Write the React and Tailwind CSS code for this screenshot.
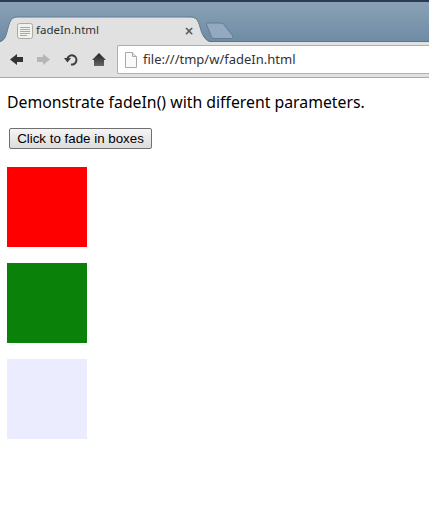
import React from "react";

function TabShape() {
  return (
    <svg className="absolute left-0 top-0" width="240" height="26" viewBox="0 0 240 26">
      <path
        d="M0 26 C5 25 6 20 8 12 C10 4 12 1 18 1 L190 1 C196 1 198 4 200 11 C202 19 205 25 210 26 Z"
        fill="#e1e1e1"
      />
      <path
        d="M0 25 C5 24 6 20 8 12 C10 4 12 1 18 1 L190 1 C196 1 198 4 200 11 C202 19 205 24 210 25"
        fill="none"
        stroke="#5f7b94"
        strokeWidth="1"
      />
      <path
        d="M206.5 8.5 C206.5 7.5 207.5 7 208.5 7 L220 7 C223 7 224 8 225 10 L232.5 19.5 C233 21 232.5 22.5 230.5 22.5 L215 22.5 C212.5 22.5 211.5 21.5 211 19.5 Z"
        fill="#94a9c0"
        stroke="#607d97"
        strokeWidth="1"
      />
    </svg>
  );
}

function PageIcon() {
  return (
    <svg width="16" height="16" viewBox="0 0 16 16">
      <rect x="0.5" y="0.5" width="15" height="15" rx="2" fill="#f1f1ee" stroke="#a9a9a6" />
      <path d="M3 4.5H13M3 6.5H13M3 8.5H13M3 10.5H13M3 12.5H10" stroke="#a8a8a8" strokeWidth="1" />
    </svg>
  );
}

function BackIcon({ color }) {
  return (
    <svg width="13" height="11" viewBox="0 0 13 11">
      <path d="M0 5.5 L7 0 V3 H13 V8 H7 V11 Z" fill={color} />
    </svg>
  );
}

function ForwardIcon({ color }) {
  return (
    <svg width="13" height="11" viewBox="0 0 13 11">
      <path d="M13 5.5 L6 0 V3 H0 V8 H6 V11 Z" fill={color} />
    </svg>
  );
}

function ReloadIcon() {
  return (
    <svg width="14" height="13" viewBox="0 0 14 13">
      <path d="M3.5 5.5 A4.6 4.6 0 1 1 7 11.5" fill="none" stroke="#3d3d3d" strokeWidth="2" />
      <path d="M0 5 H7 L3.5 9.5 Z" fill="#3d3d3d" />
    </svg>
  );
}

function HomeIcon() {
  return (
    <svg width="14" height="13" viewBox="0 0 14 13">
      <defs>
        <linearGradient id="homeFill" x1="0" y1="0" x2="0" y2="1">
          <stop offset="0" stopColor="#222222" />
          <stop offset="1" stopColor="#666666" />
        </linearGradient>
      </defs>
      <path d="M7 0 L14 7 H12 V13 H2 V7 H0 Z" fill="url(#homeFill)" />
    </svg>
  );
}

function FileIcon() {
  return (
    <svg width="12" height="16" viewBox="0 0 12 16">
      <path d="M0.5 0.5 H7.5 L11.5 4.5 V15.5 H0.5 Z" fill="#fafafa" stroke="#a8a8a8" />
      <path d="M7.5 0.5 V4.5 H11.5" fill="#e4e4e4" stroke="#a8a8a8" />
    </svg>
  );
}

export default function App() {
  return (
    <div className="h-[529px] w-[429px] overflow-hidden bg-white">
      <div className="h-[2px] bg-[#2b3a55]" />
      <div className="flex h-[39px] items-end bg-gradient-to-b from-[#8aa1b5] to-[#6f8ca5]">
        <div className="relative h-[25px] w-[240px]">
          <TabShape />
          <div className="relative flex h-full w-[208px] items-center pl-[17px] pr-[14px] pt-[4px]">
            <PageIcon />
            <span className="ml-[3px] pb-[2px] font-['Noto_Sans',sans-serif] text-[11.5px] leading-none text-[#333333]">
              fadeIn.html
            </span>
            <span className="ml-auto font-['DejaVu_Sans',sans-serif] text-xs font-bold leading-none text-[#555555]">
              ×
            </span>
          </div>
        </div>
      </div>
      <div className="h-px bg-[#5b7690]" />
      <div className="flex h-[35px] items-center bg-[#e1e1e1] pl-[10px]">
        <BackIcon color="#333333" />
        <div className="ml-[14px] flex">
          <ForwardIcon color="#b5b5b5" />
        </div>
        <div className="ml-[14px] flex">
          <ReloadIcon />
        </div>
        <div className="ml-[14px] flex">
          <HomeIcon />
        </div>
        <div className="ml-[11px] flex h-[29px] flex-1 items-center rounded-l-[2px] border border-r-0 border-[#b0b0b0] bg-white pl-[7px]">
          <FileIcon />
          <span className="ml-[6px] font-['Noto_Sans',sans-serif] text-[13px] leading-none text-[#333333]">
            file:///tmp/w/fadeIn.html
          </span>
        </div>
      </div>
      <div className="h-px bg-[#a8a8a8]" />
      <div className="px-[7px] pt-[13px]">
        <p className="font-['Noto_Sans',sans-serif] text-[15.8px] leading-[22px] text-black">
          Demonstrate fadeIn() with different parameters.
        </p>
        <button className="ml-[2px] mt-[15px] block h-[21px] w-[143px] rounded-[2px] border border-[#707070] bg-gradient-to-b from-[#f5f5f5] to-[#dcdcdc] text-center font-['Liberation_Sans',sans-serif] text-[13.33px] leading-none text-black">
          Click to fade in boxes
        </button>
        <div className="mt-[18px] flex flex-col gap-4">
          <div className="h-20 w-20 bg-[#ff0000]" />
          <div className="h-20 w-20 bg-[#0a820a]" />
          <div className="h-20 w-20 bg-[#ebecfd]" />
        </div>
      </div>
    </div>
  );
}
